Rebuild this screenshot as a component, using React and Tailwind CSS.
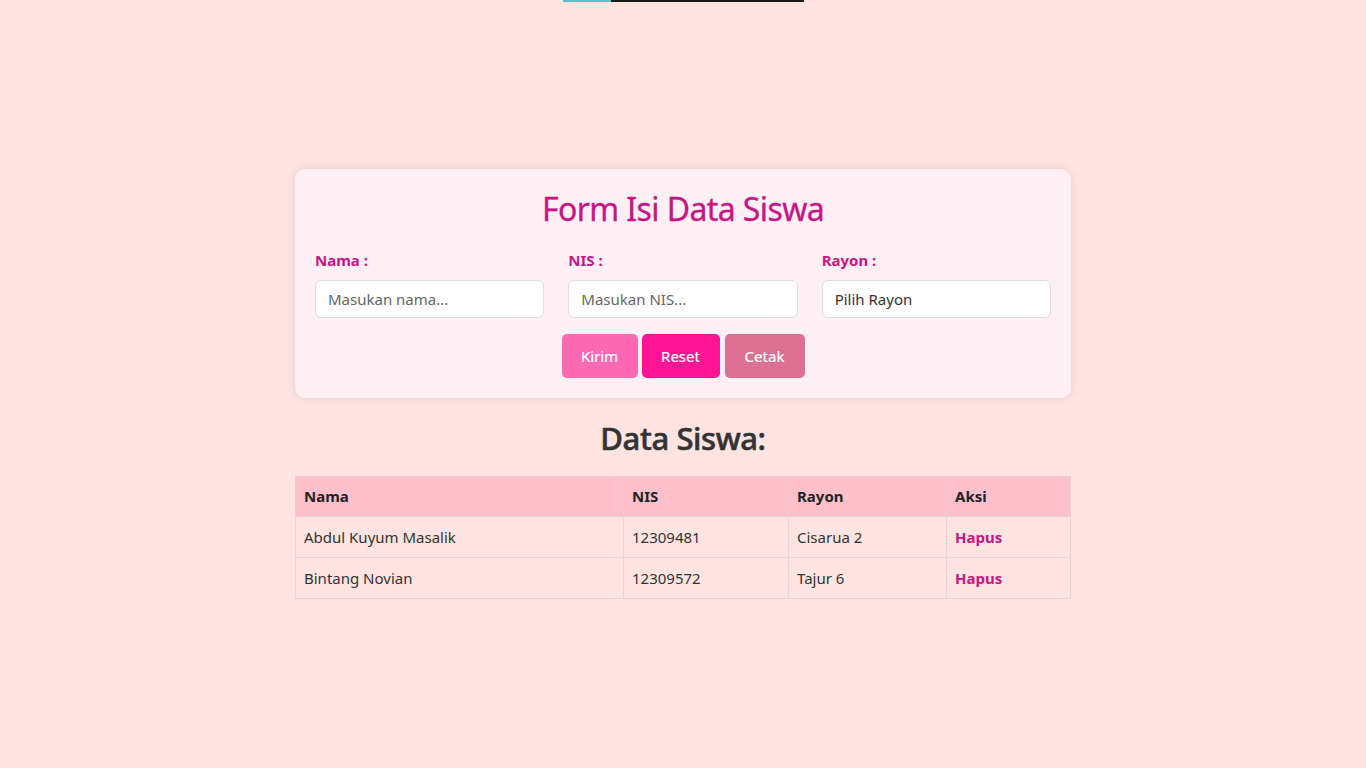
import React, { useState } from 'react';

const siswa = [
  { nama: 'Abdul Kuyum Masalik', nis: '12309481', rayon: 'Cisarua 2' },
  { nama: 'Bintang Novian', nis: '12309572', rayon: 'Tajur 6' },
];

const App = () => {
  const [rows, setRows] = useState(siswa);

  return (
    <div className="relative min-h-screen bg-[#ffe4e1] flex flex-col items-center justify-center font-['Noto_Sans',sans-serif] text-[#333]">
      {/* strip at the very top */}
      <div className="absolute top-0 left-[563px] flex h-[2px] w-[241px]">
        <div className="w-[48px] bg-[#5bc0c8]" />
        <div className="flex-1 bg-[#1a1a1a]" />
      </div>

      <div className="w-[776px] bg-[#fff0f5] rounded-[10px] shadow-[0_0_10px_rgba(0,0,0,0.1)] px-5 pt-5 pb-5">
        <h1 className="text-center text-[32px] leading-[40px] text-[#c71585] tracking-[-0.6px] [-webkit-text-stroke:0.3px_#c71585]">Form Isi Data Siswa</h1>

        <div className="grid grid-cols-3 gap-6 mt-[21px]">
          <div>
            <label className="block text-[15px] leading-[20px] font-bold text-[#c71585] mb-[10px]">Nama :</label>
            <input
              placeholder="Masukan nama..."
              className="w-full h-[38px] px-3 bg-white border border-[#ddd] rounded-[6px] text-[15px] placeholder:text-[#666] outline-none"
            />
          </div>
          <div>
            <label className="block text-[15px] leading-[20px] font-bold text-[#c71585] mb-[10px]">NIS :</label>
            <input
              placeholder="Masukan NIS..."
              className="w-full h-[38px] px-3 bg-white border border-[#ddd] rounded-[6px] text-[15px] placeholder:text-[#666] outline-none"
            />
          </div>
          <div>
            <label className="block text-[15px] leading-[20px] font-bold text-[#c71585] mb-[10px]">Rayon :</label>
            <div className="w-full h-[38px] px-3 bg-white border border-[#ddd] rounded-[6px] text-[15px] text-[#333] flex items-center">
              Pilih Rayon
            </div>
          </div>
        </div>

        <div className="flex justify-center gap-1 mt-4">
          <button className="h-[44px] w-[76px] rounded-[5px] bg-[#ff69b4] text-white text-[15px] [-webkit-text-stroke:0.2px_white]">Kirim</button>
          <button className="h-[44px] w-[78px] rounded-[5px] bg-[#ff1493] text-white text-[15px] [-webkit-text-stroke:0.2px_white]" onClick={() => setRows(siswa)}>Reset</button>
          <button className="h-[44px] w-[80px] rounded-[5px] bg-[#db7093] text-white text-[15px] ml-[1px] [-webkit-text-stroke:0.2px_white]">Cetak</button>
        </div>
      </div>

      <h2 className="mt-[20px] mb-[18px] text-[31px] leading-[40px] font-medium text-[#333] tracking-[-0.4px] [-webkit-text-stroke:0.6px_#333]">Data Siswa:</h2>

      <table className="w-[776px] table-fixed border-collapse text-[15px]">
        <thead>
          <tr className="bg-[#ffc0cb] text-[#222]">
            <th className="w-[328px] h-[40px] px-2 text-left font-bold border border-[#e8cfcf]">Nama</th>
            <th className="w-[165px] px-2 text-left font-bold border border-[#e8cfcf]">NIS</th>
            <th className="w-[158px] px-2 text-left font-bold border border-[#e8cfcf]">Rayon</th>
            <th className="px-2 text-left font-bold border border-[#e8cfcf]">Aksi</th>
          </tr>
        </thead>
        <tbody>
          {rows.map((r, i) => (
            <tr key={r.nis}>
              <td className="h-[41px] px-2 border border-[#e8d6d6]">{r.nama}</td>
              <td className="px-2 border border-[#e8d6d6]">{r.nis}</td>
              <td className="px-2 border border-[#e8d6d6]">{r.rayon}</td>
              <td className="px-2 border border-[#e8d6d6]">
                <span
                  className="font-bold text-[#c71585] cursor-pointer"
                  onClick={() => setRows(rows.filter((_, j) => j !== i))}
                >
                  Hapus
                </span>
              </td>
            </tr>
          ))}
        </tbody>
      </table>
    </div>
  );
};

export default App;
